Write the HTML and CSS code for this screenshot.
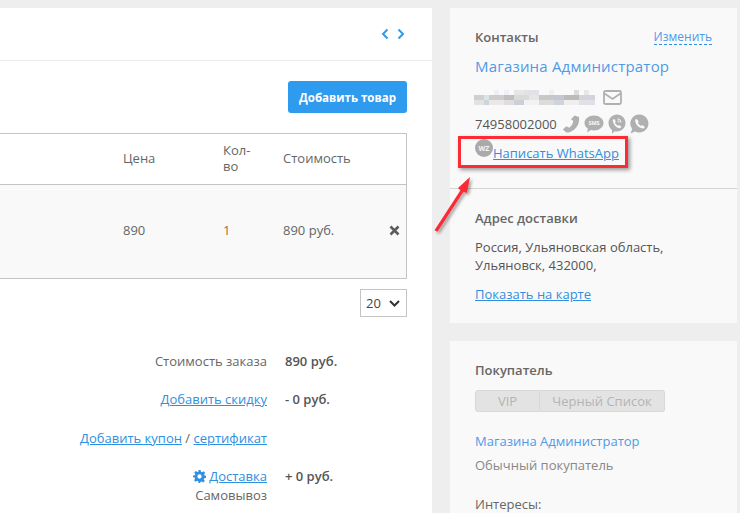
FILE: index.html
```html
<!DOCTYPE html>
<html lang="ru">
<head>
<meta charset="utf-8">
<title>Заказ</title>
<link rel="stylesheet" href="styles.css">
</head>
<body>
<div class="page">
  <main class="order">
    <div class="toolbar">
      <svg class="pager" width="24" height="12" viewBox="0 0 24 12"><path d="M6.5 1.5 2 6l4.500 4.500M17.500 1.500 22 6l-4.500 4.500" fill="none" stroke="#2f9bee" stroke-width="2"/></svg>
    </div>
    <div class="actions"><button class="add-btn">Добавить товар</button></div>
    <div class="items">
      <div class="row head">
        <span>Цена</span><span class="qty-head">Кол-<br>во</span><span>Стоимость</span><span></span>
      </div>
      <div class="row item">
        <span>890</span><span class="qty">1</span><span>890 руб.</span>
        <svg width="11" height="11" viewBox="0 0 11 11"><path d="M1.500 1.500l8 8M9.500 1.500l-8 8" stroke="#5c5c5c" stroke-width="2.600" fill="none"/></svg>
      </div>
    </div>
    <div class="per-page">
      <div class="select">20<svg width="11" height="7" viewBox="0 0 11 7"><path d="M1 1l4.500 4.500L10 1" fill="none" stroke="#333" stroke-width="2"/></svg></div>
    </div>
    <div class="summary">
      <div class="sum-label">Стоимость заказа</div><div class="sum-value">890 руб.</div>
      <div class="sum-label"><a href="#">Добавить скидку</a></div><div class="sum-value">- 0 руб.</div>
      <div class="sum-label"><a href="#">Добавить купон</a> / <a href="#">сертификат</a></div><div class="sum-value"></div>
      <div class="sum-label delivery">
        <div><svg class="gear" width="13" height="13" viewBox="0 0 24 24"><path fill="#2f8fe0" fill-rule="evenodd" d="M10 0h4l.7 3.400 2 .8L19.600 2.300l2.800 2.800-1.900 2.900.8 2L24 10.700v3.900l-3.400.7-.8 2 1.900 2.900-2.800 2.800-2.900-1.900-2 .8L13.300 24h-3l-.7-3.400-2-.8-2.900 1.900-2.800-2.800 1.900-2.900-.8-2L0 13.300v-3l3.400-.7.800-2-1.900-2.900 2.800-2.800 2.900 1.900 2-.8zM12 8a4 4 0 1 0 0 8 4 4 0 0 0 0-8z"/></svg> <a href="#">Доставка</a></div>
        <div>Самовывоз</div>
      </div><div class="sum-value">+ 0 руб.</div>
    </div>
  </main>
  <aside class="side">
    <section class="card contacts">
      <div class="contacts-top">
        <div class="card-head"><h3>Контакты</h3><a class="edit" href="#">Изменить</a></div>
        <a class="name" href="#">Магазина Администратор</a>
        <div class="line">
          <svg class="mosaic" width="121" height="15" viewBox="0 0 121 15" aria-label="email скрыт">
            <g fill="#eef0f3"><rect x="20" width="5" height="5"/><rect x="30" width="5" height="5"/><rect x="40" width="10" height="5" fill="#e6e6e6"/><rect x="50" width="15" height="5" fill="#e0e2e6"/><rect x="75" width="5" height="5"/><rect x="100" width="5" height="5" fill="#dcdcdc"/><rect x="110" width="5" height="5" fill="#e8e8e8"/></g>
            <g fill="#d0d0d0"><rect x="0" y="5" width="10" height="5"/><rect x="10" y="5" width="5" height="5" fill="#dce4e4"/><rect x="15" y="5" width="15" height="5" fill="#cfcdcb"/><rect x="30" y="5" width="10" height="5" fill="#c0bec0"/><rect x="40" y="5" width="15" height="5" fill="#dadada"/><rect x="55" y="5" width="10" height="5" fill="#e6e6e6"/><rect x="65" y="5" width="15" height="5" fill="#c8c8c8"/><rect x="80" y="5" width="10" height="5" fill="#c4c6d0"/><rect x="90" y="5" width="15" height="5" fill="#bdbbb9"/><rect x="105" y="5" width="16" height="5" fill="#d2d4da"/></g>
            <g fill="#e2e2e2"><rect x="0" y="10" width="10" height="5"/><rect x="10" y="10" width="5" height="5" fill="#ccd4dc"/><rect x="15" y="10" width="15" height="5" fill="#ebe9e7"/><rect x="30" y="10" width="10" height="5" fill="#dedede"/><rect x="40" y="10" width="10" height="5" fill="#ccd0d6"/><rect x="50" y="10" width="15" height="5" fill="#f2f2f2"/><rect x="65" y="10" width="15" height="5" fill="#dcdcdc"/><rect x="80" y="10" width="10" height="5" fill="#d0d2dc"/><rect x="90" y="10" width="15" height="5" fill="#eeeeee"/><rect x="105" y="10" width="16" height="5" fill="#e0e0e6"/></g>
          </svg>
          <svg class="mail" width="19" height="15" viewBox="0 0 19 15"><rect x="1" y="1" width="17" height="13" rx="1.500" fill="none" stroke="#b0b0b0" stroke-width="1.800"/><path d="M1.500 3.500 9.500 9l8-5.500" fill="none" stroke="#b0b0b0" stroke-width="1.800"/></svg>
        </div>
        <div class="line phone">
          <span>74958002000</span>
          <span class="icons">
            <svg width="18" height="18" viewBox="0 0 18 18"><path fill="#b0b0b0" d="M12.500.5 17 2c.8 5.500-1.500 10.500-6 13.500-2.200 1.500-4.600 2.300-6.500 2L.8 14.600l3.600-3.400 2.900 1.500c2.300-1.700 3.700-4.300 4-6.800L9 4.200z"/></svg>
            <svg width="20" height="18" viewBox="0 0 20 18"><path fill="#b0b0b0" d="M10 .5c5.200 0 9.500 3.300 9.500 7.500s-4.300 7.500-9.500 7.500c-1 0-2-.1-2.900-.4L3 17.500l.9-3.700C1.800 12.400.5 10.300.5 8 .5 3.800 4.800.5 10 .5z"/><text class="sms" x="10" y="10" text-anchor="middle">SMS</text></svg>
            <svg width="18" height="20" viewBox="0 0 18 20"><path fill="#b0b0b0" fill-rule="evenodd" d="M9 .5c4.700 0 8.500 3.700 8.500 8.500S13.700 17.500 9 17.500c-.8 0-1.500-.1-2.200-.3L4 19.800V16C1.900 14.400.5 11.900.5 9 .5 4.200 4.300.5 9 .5zM6 4.700 4.800 5.900c-.2 3.700 3.500 8.300 7.400 8.300l1.300-1.400-2.500-1.900-1.100.9C8.500 11.100 7.500 9.800 7 8.600l.9-1.200zM9.500 4.500v1c1.800.1 2.900 1.300 3 3h1c-.1-2.400-1.700-3.900-4-4zm0 2v1c.6 0 1 .4 1 1h1c0-1.200-.8-2-2-2z"/></svg>
            <svg width="19" height="20" viewBox="0 0 19 20"><path fill="#b0b0b0" fill-rule="evenodd" d="M9.500.5a9 9 0 1 1-4.400 16.900L.5 19.500l1.700-4.500A9 9 0 0 1 9.500.5zM6.500 4.700 5.200 6c-.3 4 4.200 8.600 8.400 8.400l1.300-1.400-2.700-1.900-1.100.9c-1.400-.6-2.600-2-3.200-3.400l.9-1z"/></svg>
          </span>
        </div>
        <div class="wa-line"><span class="wz">WZ</span><a href="#">Написать WhatsApp</a></div>
      </div>
      <div class="address">
        <h3>Адрес доставки</h3>
        <p>Россия, Ульяновская область,<br>Ульяновск, 432000,</p>
        <a href="#">Показать на карте</a>
      </div>
    </section>
    <section class="card buyer">
      <h3>Покупатель</h3>
      <div class="tags"><span class="tag vip">VIP</span><span class="tag black">Черный Список</span></div>
      <a class="buyer-name" href="#">Магазина Администратор</a>
      <div class="buyer-type">Обычный покупатель</div>
      <div class="interests">Интересы:</div>
    </section>
  </aside>
</div>
<div class="callout"></div>
<svg class="arrow" width="50" height="76" viewBox="0 0 50 76">
  <defs><filter id="sh" x="-30%" y="-30%" width="170%" height="170%"><feDropShadow dx="2" dy="2" stdDeviation="1.500" flood-color="#000" flood-opacity=".35"/></filter></defs>
  <path filter="url(#sh)" fill="#fb2c36" d="M38 13 35 29 31.500 27.800 5.500 67.800 2.500 66.200 28.500 26.200 26 24z"/>
</svg>
</body>
</html>
```
FILE: styles.css
```css
* { box-sizing: border-box; }
html, body { margin: 0; height: 513px; overflow: hidden; }
body {
  background: #eeeeee;
  font-family: "Open Sans", "Noto Sans", sans-serif;
  font-size: 13px;
  color: #555;
  position: relative;
}
a { color: #2f8fe0; }
h3 { margin: 0; font-size: 13px; font-weight: 600; color: #666; }

.page { display: flex; gap: 18px; padding-top: 8px; height: 513px; overflow: hidden; }

.order { width: 432px; flex: none; background: #fff; height: 505px; }
.toolbar { height: 53px; border-bottom: 1px solid #ececec; display: flex; justify-content: flex-end; align-items: flex-start; padding: 20px 27px 0 0; }
.pager { display: block; }
.actions { display: flex; justify-content: flex-end; padding: 20px 25px 20px 0; }
.add-btn {
  width: 119px; height: 32px; border: 0; border-radius: 3px; padding: 0;
  background: #2f9bee; color: #fff;
  font: 700 11.500px "Open Sans", sans-serif;
}
.items { width: 407px; border: 1px solid #c4c4c4; border-left: 0; height: 146px; }
.row { display: grid; grid-template-columns: 100px 60px 106px 17px; padding-left: 123px; align-items: center; color: #666; }
.row.head { height: 51px; border-bottom: 1px solid #c4c4c4; line-height: 16px; padding-bottom: 3px; }
.row.item { height: 93px; background: #f9f9f9; padding-bottom: 3px; }
.row.item svg { display: block; }
.qty { color: #a0703c; }
.per-page { width: 407px; display: flex; justify-content: flex-end; padding-top: 10px; }
.select {
  width: 47px; height: 28px; border: 1px solid #c4c4c4; background: #fff;
  display: flex; justify-content: space-between; align-items: center; padding: 0 6px 0 5px; color: #444; font-size: 13px;
}
.summary { display: grid; grid-template-columns: 267px 140px; column-gap: 18px; margin-top: 35px; line-height: 18px; }
.sum-label { text-align: right; white-space: nowrap; color: #666; min-height: 38.300px; }
.sum-value { font-weight: 600; color: #555; }
.gear { vertical-align: -2px; }
.delivery { line-height: 19px; }

.side { width: 287px; flex: none; display: flex; flex-direction: column; gap: 18px; }
.card { background: #f9f9f9; }
.contacts { height: 315px; flex: none; }
.contacts-top { padding: 20px 25px 0; height: 181px; border-bottom: 1px solid #d4d4d4; }
.card-head { display: flex; justify-content: space-between; align-items: flex-start; line-height: 18px; }
.edit { color: #4f9ae8; text-decoration: none; border-bottom: 1px dashed #2f8fe0; font-size: 12px; line-height: 14px; margin-top: 2px; }
.name { display: block; color: #4f9ae8; text-decoration: none; font-size: 15px; line-height: 20px; margin-top: 10px; letter-spacing: .2px; }
.line { display: flex; align-items: center; height: 20px; margin-top: 11px; gap: 5px; }
.mosaic { display: block; margin-left: -1px; }
.mail { display: block; margin-left: 3px; }
.phone { margin-top: 7px; color: #555; gap: 5px; }
.icons { display: flex; gap: 4px; align-items: center; }
.icons svg { display: block; }
.sms { font: 700 5.500px "Open Sans", sans-serif; fill: #f9f9f9; }
.wa-line { display: flex; align-items: flex-end; height: 22px; margin-top: 6px; }
.wa-line a { line-height: 18px; white-space: nowrap; }
.wz {
  width: 18px; height: 18px; border-radius: 50%; background: #aaa; color: #f4f4f4;
  font-size: 7px; font-weight: 700; display: flex; align-items: center; justify-content: center;
  margin-bottom: 5px; flex: none;
}
.address { padding: 20px 25px 0; }
.address p { margin: 10.500px 0 0; line-height: 18px; color: #555; }
.address a { display: block; margin-top: 11px; line-height: 18px; }

.buyer { flex: 1; padding: 20px 25px 0; }
.tags { display: flex; width: 190px; height: 22px; margin-top: 11px; }
.tag { background: #e3e3e3; border: 1px solid #d8d8d8; color: #b4b4b4; display: flex; align-items: center; justify-content: center; }
.vip { width: 65px; border-radius: 3px 0 0 3px; }
.black { width: 125px; border-left: 0; border-radius: 0 3px 3px 0; }
.buyer-name { display: block; color: #4f9ae8; text-decoration: none; margin-top: 20px; line-height: 18px; }
.buyer-type { color: #888; margin-top: 6px; line-height: 18px; }
.interests { color: #666; margin-top: 21px; line-height: 18px; }

.callout {
  position: absolute; left: 458px; top: 136px; width: 170px; height: 32px;
  border: 3px solid #fb2c36; box-shadow: 2px 2px 4px rgba(0,0,0,.4);
}
.arrow { position: absolute; left: 432px; top: 164px; }
```
